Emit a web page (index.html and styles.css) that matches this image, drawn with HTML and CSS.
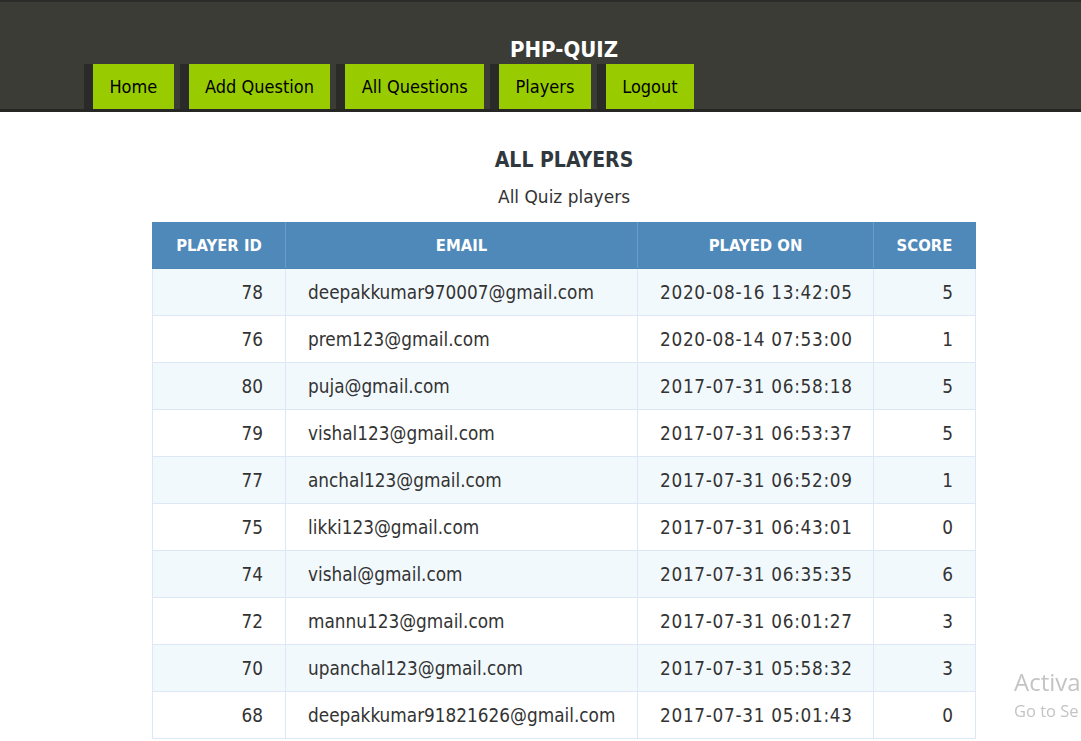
FILE: index.html
```html
<!DOCTYPE html>
<html>
<head>
<meta charset="utf-8">
<title>PHP-QUIZ</title>
<link rel="stylesheet" href="styles.css">
</head>
<body>
<header class="site-header">
  <div class="container">
    <h1 class="brand">PHP-QUIZ</h1>
    <ul class="nav">
      <li><a href="#">Home</a></li>
      <li><a href="#">Add Question</a></li>
      <li><a href="#">All Questions</a></li>
      <li><a href="#">Players</a></li>
      <li><a href="#">Logout</a></li>
    </ul>
  </div>
</header>
<main class="container">
  <h2 class="page-title">ALL PLAYERS</h2>
  <p class="page-sub">All Quiz players</p>
  <table class="players">
    <colgroup>
      <col class="c-id"><col class="c-email"><col class="c-date"><col class="c-score">
    </colgroup>
    <thead>
      <tr><th>PLAYER ID</th><th>EMAIL</th><th>PLAYED ON</th><th>SCORE</th></tr>
    </thead>
    <tbody>
      <tr><td class="num">78</td><td>deepakkumar970007@gmail.com</td><td class="date">2020-08-16 13:42:05</td><td class="num">5</td></tr>
      <tr><td class="num">76</td><td>prem123@gmail.com</td><td class="date">2020-08-14 07:53:00</td><td class="num">1</td></tr>
      <tr><td class="num">80</td><td>puja@gmail.com</td><td class="date">2017-07-31 06:58:18</td><td class="num">5</td></tr>
      <tr><td class="num">79</td><td>vishal123@gmail.com</td><td class="date">2017-07-31 06:53:37</td><td class="num">5</td></tr>
      <tr><td class="num">77</td><td>anchal123@gmail.com</td><td class="date">2017-07-31 06:52:09</td><td class="num">1</td></tr>
      <tr><td class="num">75</td><td>likki123@gmail.com</td><td class="date">2017-07-31 06:43:01</td><td class="num">0</td></tr>
      <tr><td class="num">74</td><td>vishal@gmail.com</td><td class="date">2017-07-31 06:35:35</td><td class="num">6</td></tr>
      <tr><td class="num">72</td><td>mannu123@gmail.com</td><td class="date">2017-07-31 06:01:27</td><td class="num">3</td></tr>
      <tr><td class="num">70</td><td>upanchal123@gmail.com</td><td class="date">2017-07-31 05:58:32</td><td class="num">3</td></tr>
      <tr><td class="num">68</td><td>deepakkumar91821626@gmail.com</td><td class="date">2017-07-31 05:01:43</td><td class="num">0</td></tr>
    </tbody>
  </table>
</main>
<div class="watermark">
  <div class="wm-title">Activa</div>
  <div class="wm-sub">Go to Se</div>
</div>
</body>
</html>
```
FILE: styles.css
```css
html, body {
  margin: 0;
  padding: 0;
  overflow: hidden;
  background: #ffffff;
}
body {
  font-family: "DejaVu Sans Condensed", "DejaVu Sans", sans-serif;
  color: #333;
}
.container {
  width: 960px;
  margin-left: 84px;
}
.site-header {
  background: #3c3c37;
  border-top: 2px solid #2b2b29;
  border-bottom: 3px solid #262624;
  padding-top: 35px;
}
.brand {
  margin: 0 0 1px 0;
  text-align: center;
  color: #ffffff;
  font-family: "DejaVu Sans Condensed", "DejaVu Sans", sans-serif;
  font-weight: bold;
  font-size: 22px;
  line-height: 26px;
}
.nav {
  list-style: none;
  margin: 0;
  padding: 0;
  display: flex;
}
.nav li {
  background: #2a2a28;
  padding-left: 9px;
  margin-right: 6px;
  display: flex;
}
.nav a {
  display: block;
  background: #99cc00;
  color: #000;
  text-decoration: none;
  font-size: 18px;
  line-height: 45px;
  padding: 0 16.4px;
}
.page-title {
  margin: 34px 0 0 0;
  text-align: center;
  font-size: 21px;
  line-height: 28px;
  font-weight: bold;
  color: #30373d;
}
.page-sub {
  margin: 12px 0 0 0;
  text-align: center;
  font-family: "DejaVu Sans", sans-serif;
  font-size: 17px;
  line-height: 22px;
  color: #333;
}
.players {
  margin: 14px auto 0 auto;
  width: 823px;
  border-collapse: collapse;
  table-layout: fixed;
}
.c-id { width: 133px; }
.c-email { width: 352px; }
.c-date { width: 236px; }
.c-score { width: 102px; }
.players th {
  background: #4f89ba;
  color: #ffffff;
  font-weight: bold;
  font-size: 16.5px;
  height: 45px;
  padding: 0;
  text-align: center;
  border: 1px solid #6b9dc8;
  border-top-color: #4f89ba;
  border-bottom-color: #4a85b6;
}
.players th:first-child { border-left-color: #4f89ba; }
.players th:last-child { border-right-color: #4f89ba; }
.players td {
  height: 46px;
  padding: 0 22px;
  font-size: 18.8px;
  color: #333;
  border: 1px solid #dce8f6;
  vertical-align: middle;
  white-space: nowrap;
}
.players tbody tr:nth-child(odd) td {
  background: #f2f9fd;
}
.players td.num {
  text-align: right;
}
.players td.date {
  letter-spacing: 0.7px;
}
.watermark {
  position: fixed;
  left: 1014px;
  top: 666px;
  white-space: nowrap;
  font-family: "Open Sans", "Noto Sans", sans-serif;
  color: #c4c4c4;
}
.wm-title {
  font-size: 24px;
  line-height: 32px;
}
.wm-sub {
  font-size: 16.5px;
  line-height: 26px;
}
```
